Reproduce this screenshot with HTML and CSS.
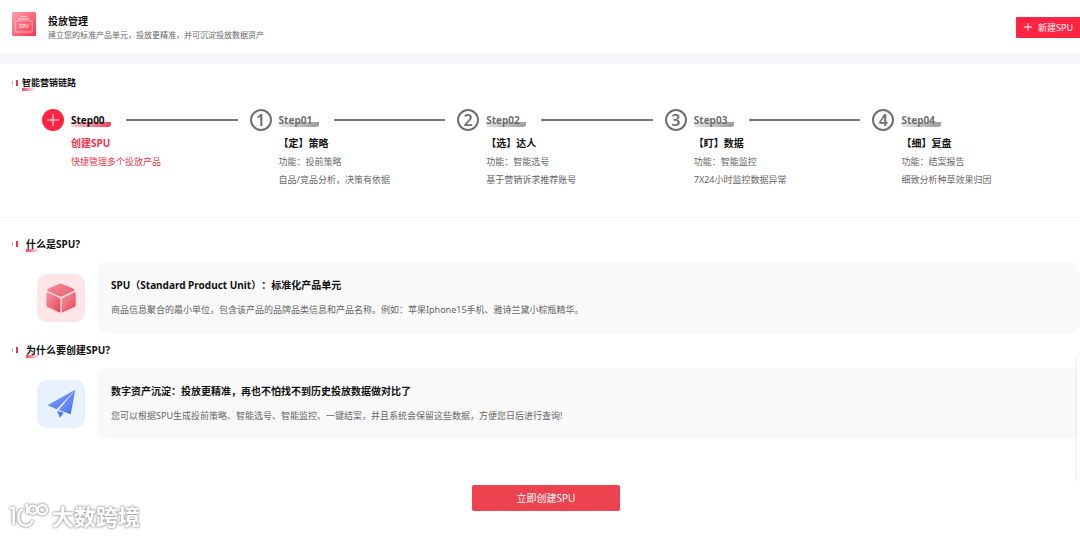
FILE: index.html
```
<!DOCTYPE html>
<html lang="zh-CN">
<head>
    <meta charset="UTF-8">
    <meta name="viewport" content="width=device-width, initial-scale=1.0">
    <title>投放管理</title>
    <link rel="stylesheet" href="styles.css">
</head>
<body>
    <header class="page-header">
        <svg class="header-icon" viewBox="0 0 72 72" aria-hidden="true">
            <defs>
                <linearGradient id="spuBg" x1="0" y1="0" x2="1" y2="1">
                    <stop offset="0" stop-color="#ffa0aa"/>
                    <stop offset="1" stop-color="#fb3350"/>
                </linearGradient>
            </defs>
            <rect width="72" height="72" rx="3" fill="url(#spuBg)"/>
            <g fill="none" stroke="#ffe0e4" stroke-width="2">
                <path d="M24 14h22M18 20h34"/>
                <path d="M10 28h6l3-4h32l3 4h7v32H10z"/>
            </g>
            <text x="36" y="49" text-anchor="middle">SPU</text>
        </svg>
        <div class="header-text">
            <h1>投放管理</h1>
            <p>建立您的标准产品单元，投放更精准，并可沉淀投放数据资产</p>
        </div>
        <button type="button" class="new-button">
            <svg viewBox="0 0 8 8" aria-hidden="true"><path d="M4 0v8M0 4h8"/></svg>
            新建SPU
        </button>
    </header>

    <main>
        <!-- Marketing steps -->
        <section class="flow">
            <h2 class="section-title small"><span>智能营销链路</span></h2>
            <ol class="steps">
                <li class="step active">
                    <div class="step-head">
                        <span class="step-number"><svg viewBox="0 0 22 22" aria-hidden="true"><path d="M11 5v12M5 11h12"/></svg></span>
                        <span class="step-name">Step00</span>
                    </div>
                    <div class="step-body">
                        <h3>创建SPU</h3>
                        <p>快捷管理多个投放产品</p>
                    </div>
                </li>
                <li class="step">
                    <div class="step-head">
                        <span class="step-number">1</span>
                        <span class="step-name">Step01</span>
                    </div>
                    <div class="step-body">
                        <h3>【定】策略</h3>
                        <p>功能：投前策略</p>
                        <p>自品/竞品分析，决策有依据</p>
                    </div>
                </li>
                <li class="step">
                    <div class="step-head">
                        <span class="step-number">2</span>
                        <span class="step-name">Step02</span>
                    </div>
                    <div class="step-body">
                        <h3>【选】达人</h3>
                        <p>功能：智能选号</p>
                        <p>基于营销诉求推荐账号</p>
                    </div>
                </li>
                <li class="step">
                    <div class="step-head">
                        <span class="step-number">3</span>
                        <span class="step-name">Step03</span>
                    </div>
                    <div class="step-body">
                        <h3>【盯】数据</h3>
                        <p>功能：智能监控</p>
                        <p>7X24小时监控数据异常</p>
                    </div>
                </li>
                <li class="step">
                    <div class="step-head">
                        <span class="step-number">4</span>
                        <span class="step-name">Step04</span>
                    </div>
                    <div class="step-body">
                        <h3>【细】复盘</h3>
                        <p>功能：结案报告</p>
                        <p>细致分析种草效果归因</p>
                    </div>
                </li>
            </ol>
        </section>

        <!-- What is SPU -->
        <section class="info">
            <h2 class="section-title"><span>什么是SPU?</span></h2>
            <div class="info-row">
                <div class="info-icon pink">
                    <svg viewBox="0 0 144 144" aria-hidden="true">
                        <defs>
                            <linearGradient id="cubeTop" x1="0" y1="0" x2="1" y2="1">
                                <stop offset="0" stop-color="#f28d98"/>
                                <stop offset="1" stop-color="#ea5f6e"/>
                            </linearGradient>
                            <linearGradient id="cubeSide" x1="0" y1="0" x2="1" y2="1">
                                <stop offset="0" stop-color="#f49aa4"/>
                                <stop offset="1" stop-color="#e84052"/>
                            </linearGradient>
                        </defs>
                        <path fill="url(#cubeTop)" d="M66 30q5-2 10 0l34 14q6 4 0 7L76 67q-5 2-10 0L33 51q-5-4 0-7z"/>
                        <path fill="url(#cubeSide)" d="M28 58q0-4 4-3l34 16q4 2 4 6v36q0 4-4 2L32 99q-4-2-4-6z"/>
                        <path fill="url(#cubeSide)" d="M116 58q0-4-4-3L78 71q-4 2-4 6v36q0 4 4 2l34-16q4-2 4-6z"/>
                    </svg>
                </div>
                <div class="info-card">
                    <h3>SPU（Standard Product Unit）：标准化产品单元</h3>
                    <p>商品信息聚合的最小单位，包含该产品的品牌品类信息和产品名称。例如：苹果Iphone15手机、雅诗兰黛小棕瓶精华。</p>
                </div>
            </div>
        </section>

        <!-- Why create SPU -->
        <section class="info">
            <h2 class="section-title"><span>为什么要创建SPU?</span></h2>
            <div class="info-row">
                <div class="info-icon blue">
                    <svg viewBox="0 0 144 144" aria-hidden="true">
                        <defs>
                            <linearGradient id="planeFill" x1="0" y1="0" x2="1" y2="1">
                                <stop offset="0" stop-color="#92b0ff"/>
                                <stop offset="1" stop-color="#3f66f2"/>
                            </linearGradient>
                        </defs>
                        <path fill="url(#planeFill)" d="M115 29L31 76l28 12z"/>
                        <path fill="url(#planeFill)" d="M115 29L65 90l36 13z"/>
                        <path fill="#5577f4" d="M60 92l9 22 11-16z"/>
                    </svg>
                </div>
                <div class="info-card">
                    <h3>数字资产沉淀：投放更精准，再也不怕找不到历史投放数据做对比了</h3>
                    <p>您可以根据SPU生成投前策略、智能选号、智能监控、一键结案，并且系统会保留这些数据，方便您日后进行查询!</p>
                </div>
            </div>
        </section>

        <div class="actions">
            <button type="button" class="create-button">立即创建SPU</button>
        </div>
    </main>

    <aside class="side-panel"></aside>

    <div class="watermark">
        <svg viewBox="0 0 120 78" aria-hidden="true">
            <path d="M3 15h11v49"/>
            <path d="M42 20q-14 2-14 20q0 28 22 28q16 0 21-16"/>
            <path d="M48 7h7v26"/>
            <circle cx="72" cy="20" r="12"/>
            <circle cx="100" cy="20" r="14"/>
        </svg>
        <span>大数跨境</span>
    </div>
</body>
</html>
```
FILE: styles.css
```
/* General */
*, *::before, *::after {
    margin: 0;
    padding: 0;
    box-sizing: border-box;
}

body {
    background-color: #fff;
    color: #111;
    font-family: "Noto Sans", "Noto Sans CJK SC", sans-serif;
    font-size: 9px;
    line-height: 18px;
    text-spacing-trim: space-all;
}

button {
    border: none;
    color: #fff;
    font-family: inherit;
    cursor: pointer;
}

h1, h2, h3 {
    font-size: 10px;
    font-weight: 700;
}

/* Header */
.page-header {
    display: flex;
    align-items: center;
    padding: 12px 0 11px 12px;
    border-bottom: 11px solid #f5f6f9;
}

.header-icon {
    align-self: flex-start;
    width: 24px;
    height: 24px;
    margin-right: 12px;
}

.header-icon text {
    fill: #ffe8eb;
    font-size: 15px;
    font-weight: 600;
}

.header-text {
    flex: 1;
    padding-top: 2px;
}

.header-text h1 {
    line-height: 14px;
}

.header-text p {
    color: #666;
    font-size: 8px;
    line-height: 14px;
}

.new-button {
    display: flex;
    align-items: center;
    gap: 6px;
    padding: 0 7px 0 8px;
    border-radius: 1px 0 0 1px;
    background-color: #ff2442;
    font-size: 9px;
    line-height: 21px;
}

.new-button svg {
    width: 8px;
    height: 8px;
    stroke: #fff;
}

/* Section titles */
.section-title {
    display: flex;
    align-items: center;
    padding-left: 12px;
    line-height: 16px;
}

.section-title::before {
    content: "";
    width: 6px;
    height: 6px;
    margin-right: 8px;
    border-right: 2px solid #e8344c;
    background: linear-gradient(#bbb, #bbb) left center / 1px 4px no-repeat;
}

.section-title.small {
    font-size: 9px;
}

.section-title.small::before {
    margin-right: 4px;
}

.section-title span {
    background: linear-gradient(90deg, #f0455a, transparent) left bottom / 14px 3px no-repeat;
}

/* Steps */
.flow {
    padding-top: 11px;
    border-bottom: 1px solid #f5f5f5;
}

.steps {
    display: grid;
    grid-template-columns: repeat(5, 1fr);
    min-height: 108px;
    margin: 18px 0 0 42px;
    list-style: none;
}

.step-head {
    display: flex;
    align-items: center;
}

.step-number {
    display: flex;
    align-items: center;
    justify-content: center;
    width: 22px;
    height: 22px;
    margin-right: 7px;
    border: 2px solid #707070;
    border-radius: 50%;
    color: #707070;
    font-size: 16px;
    font-weight: 600;
}

.step-name {
    width: 40px;
    color: #707070;
    font-size: 10px;
    font-weight: 700;
    line-height: 14px;
    background: linear-gradient(90deg, #e4e4e4, #9c9c9c) left bottom / 40px 5px no-repeat;
    border-radius: 0 0 3px 3px;
}

.step:not(:last-child) .step-head::after {
    content: "";
    flex: 1;
    height: 2px;
    margin: 0 12px 0 15px;
    background-color: #777;
}

.step-body {
    padding: 3px 0 0 29px;
    color: #666;
}

.step-body h3 {
    color: #111;
    line-height: 19px;
}

.active .step-number {
    border: none;
    background-color: #ff2442;
}

.active .step-number svg {
    width: 22px;
    height: 22px;
    stroke: #fff;
}

.active .step-name {
    color: #111;
    background-image: linear-gradient(90deg, #fbd0d6, #ef3f55);
}

.active .step-body,
.active .step-body h3 {
    color: #f0354c;
}

/* Info blocks */
.info {
    padding-top: 9px;
}

.flow + .info {
    padding-top: 18px;
}

.info-row {
    display: flex;
    align-items: center;
    gap: 12px;
    margin-top: 10px;
    padding-left: 37px;
}

.info-icon {
    width: 48px;
    height: 48px;
    border-radius: 10px;
}

.info-icon svg {
    display: block;
}

.info-icon.pink {
    background-color: #ffe4e8;
}

.info-icon.blue {
    background-color: #e8f2ff;
}

.info-card {
    flex: 1;
    padding: 14px;
    border-radius: 10px;
    background-color: #f9f9f9;
}

.info-card p {
    margin-top: 7px;
    color: #666;
}

/* Bottom button */
.actions {
    margin-top: 46px;
    padding-left: 12px;
    text-align: center;
}

.create-button {
    width: 148px;
    border-radius: 2px;
    background-color: #ed4351;
    font-size: 10px;
    line-height: 26px;
}

/* Floating parts */
.side-panel {
    position: fixed;
    top: 356px;
    right: 0;
    width: 3px;
    height: 125px;
    border-radius: 3px 0 0 3px;
    background-color: #fff;
    box-shadow: 0 0 3px rgba(0, 0, 0, 0.15);
}

.watermark {
    position: fixed;
    left: 9px;
    bottom: 5px;
    display: flex;
    align-items: center;
    gap: 3px;
    color: #fff;
    font-size: 22px;
    font-weight: 700;
    line-height: 30px;
    filter: drop-shadow(0 0 1px #999) drop-shadow(0 0 1px #bbb);
}

.watermark svg {
    width: 40px;
    height: 26px;
    fill: none;
    stroke: #fff;
    stroke-width: 7;
}
```
